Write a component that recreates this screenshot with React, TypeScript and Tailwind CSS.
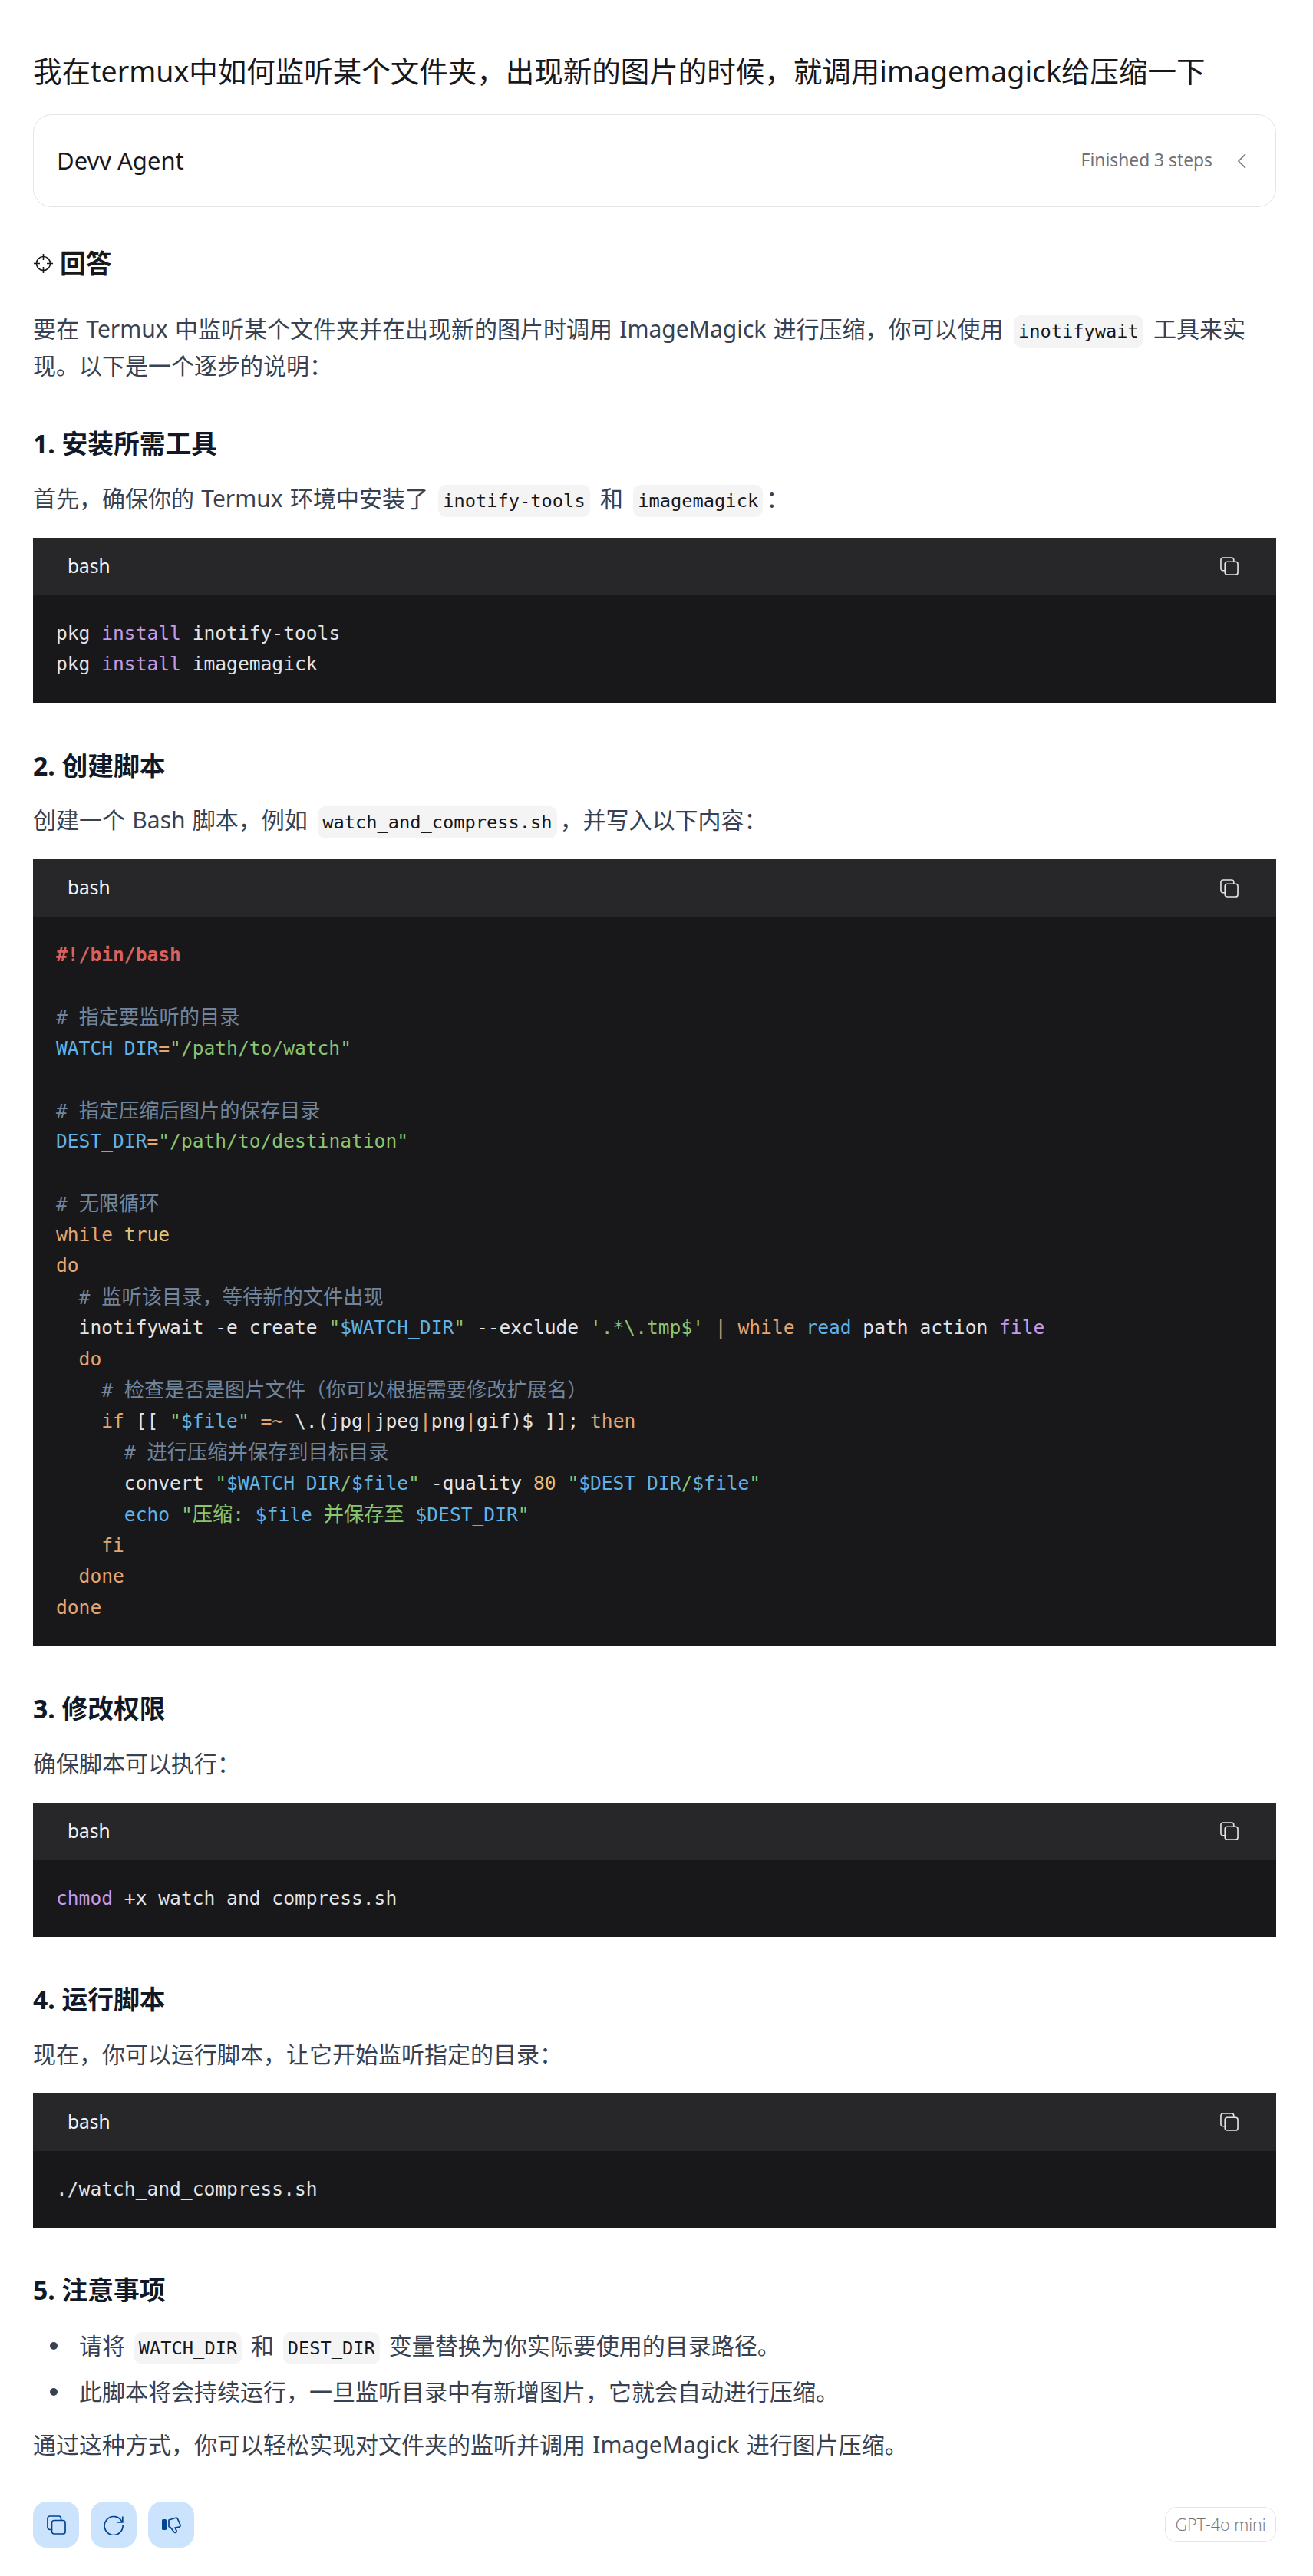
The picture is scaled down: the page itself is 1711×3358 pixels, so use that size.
import React from 'react';

const W = 'text-[#e4e4e7]';
const K = 'text-[#e5a56f]';
const B = 'text-[#61b3e6]';
const G = 'text-[#8cc570]';
const P = 'text-[#c79ae6]';
const C = 'text-[#71859c]';
const Y = 'text-[#e5c07b]';
const N = 'text-[#e5c07b]';
const R = 'text-[#d9625e] font-bold';
const CJK = 'text-[26.25px]';

type Token = [string, string];

const SCRIPT: Token[][] = [
  [[R, '#!/bin/bash']],
  [],
  [[C, '# '], [`${C} ${CJK}`, '指定要监听的目录']],
  [[B, 'WATCH_DIR'], [K, '='], [G, '"/path/to/watch"']],
  [],
  [[C, '# '], [`${C} ${CJK}`, '指定压缩后图片的保存目录']],
  [[B, 'DEST_DIR'], [K, '='], [G, '"/path/to/destination"']],
  [],
  [[C, '# '], [`${C} ${CJK}`, '无限循环']],
  [[K, 'while'], [W, ' '], [Y, 'true']],
  [[K, 'do']],
  [[C, '  # '], [`${C} ${CJK}`, '监听该目录，等待新的文件出现']],
  [
    [W, '  inotifywait -e create '],
    [G, '"'],
    [B, '$WATCH_DIR'],
    [G, '"'],
    [W, ' --exclude '],
    [G, "'.*\\.tmp$'"],
    [W, ' '],
    [K, '|'],
    [W, ' '],
    [K, 'while'],
    [W, ' '],
    [B, 'read'],
    [W, ' path action '],
    [P, 'file'],
  ],
  [[K, '  do']],
  [[C, '    # '], [`${C} ${CJK}`, '检查是否是图片文件（你可以根据需要修改扩展名）']],
  [
    [K, '    if'],
    [W, ' [[ '],
    [G, '"'],
    [B, '$file'],
    [G, '"'],
    [W, ' '],
    [K, '=~'],
    [W, ' \\.(jpg'],
    [K, '|'],
    [W, 'jpeg'],
    [K, '|'],
    [W, 'png'],
    [K, '|'],
    [W, 'gif)$ ]]; '],
    [K, 'then'],
  ],
  [[C, '      # '], [`${C} ${CJK}`, '进行压缩并保存到目标目录']],
  [
    [W, '      convert '],
    [G, '"'],
    [B, '$WATCH_DIR'],
    [G, '/'],
    [B, '$file'],
    [G, '"'],
    [W, ' -quality '],
    [N, '80'],
    [W, ' '],
    [G, '"'],
    [B, '$DEST_DIR'],
    [G, '/'],
    [B, '$file'],
    [G, '"'],
  ],
  [
    [B, '      echo'],
    [W, ' '],
    [G, '"'],
    [`${G} ${CJK}`, '压缩'],
    [G, ': '],
    [B, '$file'],
    [G, ' '],
    [`${G} ${CJK}`, '并保存至'],
    [G, ' '],
    [B, '$DEST_DIR'],
    [G, '"'],
  ],
  [[K, '    fi']],
  [[K, '  done']],
  [[K, 'done']],
];

const INSTALL: Token[][] = [
  [[W, 'pkg '], [P, 'install'], [W, ' inotify-tools']],
  [[W, 'pkg '], [P, 'install'], [W, ' imagemagick']],
];

const CHMOD: Token[][] = [[[P, 'chmod'], [W, ' +x watch_and_compress.sh']]];
const RUN: Token[][] = [[[W, './watch_and_compress.sh']]];

const CopyIcon = ({ className }: { className: string }) => (
  <svg viewBox="0 0 25 25" fill="none" stroke="currentColor" strokeWidth="1.7" className={className}>
    <path d="M6.5 18.5H4a3 3 0 0 1-3-3V4a3 3 0 0 1 3-3h11.5a3 3 0 0 1 3 3v2.5" />
    <rect x="6.5" y="6.5" width="17.5" height="17.5" rx="3" />
  </svg>
);

const RefreshIcon = () => (
  <svg viewBox="0 0 26 26" fill="none" stroke="currentColor" strokeWidth="1.7" className="w-[26px] h-[26px]">
    <path d="M24 9.5A12 12 0 1 0 25 13" />
    <path d="M24.8 2.5V10H17.2" />
  </svg>
);

const DislikeIcon = () => (
  <svg viewBox="0 0 25 23" fill="none" stroke="currentColor" strokeWidth="1.7" className="w-[25px] h-[23px]">
    <rect x="0" y="4" width="6" height="14" rx="1.5" fill="currentColor" stroke="none" />
    <path d="M9 5l9-2.8a2 2 0 0 1 2.4 1.2L24 11.5a2 2 0 0 1-1.6 2.6L17 15l1.8 3.5a1.8 1.8 0 0 1-3.2 1.9L11.5 15 9 13.5z" strokeLinejoin="round" />
  </svg>
);

const TargetIcon = () => (
  <svg viewBox="0 0 27 27" fill="none" stroke="currentColor" strokeWidth="1.6" className="w-[27px] h-[27px] shrink-0">
    <circle cx="13.5" cy="13.5" r="9" />
    <path d="M13.5 1v8M13.5 18v8M1 13.5h8M18 13.5h8" />
  </svg>
);

const InlineCode = ({ children }: { children: React.ReactNode }) => (
  <code className="mx-[4px] rounded-[10px] bg-[#f4f4f5] px-[6px] py-[7px] font-['DejaVu_Sans_Mono','Noto_Sans_CJK_SC',monospace] text-[23.7px] leading-none text-[#18181b]">
    {children}
  </code>
);

const Heading = ({ children }: { children: React.ReactNode }) => (
  <h3 className="mt-[57px] text-[33.75px] leading-[48px] font-bold text-[#111827]">{children}</h3>
);

const Para = ({ children }: { children: React.ReactNode }) => (
  <p className="mt-[23.5px] text-[30px] leading-[48px] text-[#374151] [word-spacing:1.5px]">{children}</p>
);

const Bullet = ({ children }: { children: React.ReactNode }) => (
  <li className="flex items-center">
    <span className="ml-[22px] mr-[28px] h-[10px] w-[10px] shrink-0 rounded-full bg-[#374151]" />
    <div>{children}</div>
  </li>
);

const CodeBlock = ({ lines }: { lines: Token[][] }) => (
  <div className="mt-[27px] bg-[#18181b]">
    <div className="flex h-[75px] items-center justify-between bg-[#27272a] pl-[45px] pr-[49px]">
      <span className="text-[24.5px] text-[#f4f4f5]">bash</span>
      <CopyIcon className="h-[24px] w-[24px] text-[#e4e4e7]" />
    </div>
    <pre className="px-[30px] py-[30px] font-['DejaVu_Sans_Mono','Noto_Sans_CJK_SC',monospace] text-[24.6px]">
      {lines.map((line, i) => (
        <div key={i} className="h-[40.5px] leading-[40.5px] whitespace-pre">
          {line.map(([cls, text], j) => (
            <span key={j} className={cls}>
              {text}
            </span>
          ))}
        </div>
      ))}
    </pre>
  </div>
);

const ActionButton = ({ children }: { children: React.ReactNode }) => (
  <button className="flex h-[60px] w-[60px] items-center justify-center rounded-[18px] bg-[#cce3fd] text-[#004493]">
    {children}
  </button>
);

export default function App() {
  return (
    <div className="bg-white pl-[43px] pr-[48px] pt-[69px] pb-[36px] font-['Noto_Sans','Noto_Sans_CJK_SC',sans-serif]">
      <h1 className="text-[37.5px] leading-[48px] text-[#18181b]">
        我在termux中如何监听某个文件夹，出现新的图片的时候，就调用imagemagick给压缩一下
      </h1>

      <div className="mt-[32px] flex h-[121px] items-center justify-between rounded-[24px] border-[1.5px] border-[#e4e4e7] pl-[30px] pr-[38px]">
        <span className="text-[31px] text-[#18181b]">Devv Agent</span>
        <div className="flex items-center gap-[32px] text-[#71717a]">
          <span className="text-[22.8px]">Finished 3 steps</span>
          <svg viewBox="0 0 12 20" fill="none" stroke="currentColor" strokeWidth="1.6" className="h-[20px] w-[12px]">
            <path d="M11 1L2 10l9 9" />
          </svg>
        </div>
      </div>

      <div className="mt-[49px] flex items-center gap-[8px] text-[#18181b]">
        <TargetIcon />
        <h2 className="text-[33.75px] leading-[48px] font-bold">回答</h2>
      </div>

      <p className="mt-[38px] text-[30px] leading-[48px] text-[#374151] [word-spacing:1.5px]">
        要在 Termux 中监听某个文件夹并在出现新的图片时调用 ImageMagick 进行压缩，你可以使用{' '}
        <InlineCode>inotifywait</InlineCode> 工具来实现。以下是一个逐步的说明：
      </p>

      <h3 className="mt-[53px] text-[33.75px] leading-[48px] font-bold text-[#111827]">1. 安装所需工具</h3>
      <Para>
        首先，确保你的 Termux 环境中安装了 <InlineCode>inotify-tools</InlineCode> 和{' '}
        <InlineCode>imagemagick</InlineCode>：
      </Para>
      <CodeBlock lines={INSTALL} />

      <Heading>2. 创建脚本</Heading>
      <Para>
        创建一个 Bash 脚本，例如 <InlineCode>watch_and_compress.sh</InlineCode>，并写入以下内容：
      </Para>
      <CodeBlock lines={SCRIPT} />

      <Heading>3. 修改权限</Heading>
      <Para>确保脚本可以执行：</Para>
      <CodeBlock lines={CHMOD} />

      <Heading>4. 运行脚本</Heading>
      <Para>现在，你可以运行脚本，让它开始监听指定的目录：</Para>
      <CodeBlock lines={RUN} />

      <Heading>5. 注意事项</Heading>
      <ul className="mt-[25px] space-y-[12px] text-[30px] leading-[48px] text-[#374151]">
        <Bullet>
          请将 <InlineCode>WATCH_DIR</InlineCode> 和 <InlineCode>DEST_DIR</InlineCode> 变量替换为你实际要使用的目录路径。
        </Bullet>
        <Bullet>此脚本将会持续运行，一旦监听目录中有新增图片，它就会自动进行压缩。</Bullet>
      </ul>
      <p className="mt-[21px] text-[30px] leading-[48px] text-[#374151] [word-spacing:1.5px]">
        通过这种方式，你可以轻松实现对文件夹的监听并调用 ImageMagick 进行图片压缩。
      </p>

      <div className="mt-[50px] flex items-center justify-between">
        <div className="flex gap-[15px]">
          <ActionButton>
            <CopyIcon className="h-[25px] w-[25px]" />
          </ActionButton>
          <ActionButton>
            <RefreshIcon />
          </ActionButton>
          <ActionButton>
            <DislikeIcon />
          </ActionButton>
        </div>
        <span className="flex h-[46px] w-[145px] items-center justify-center rounded-[15px] border-[1.5px] border-[#e4e4e7] font-['Open_Sans',sans-serif] text-[21.5px] font-light text-[#71717a]">
          GPT-4o mini
        </span>
      </div>
    </div>
  );
}
